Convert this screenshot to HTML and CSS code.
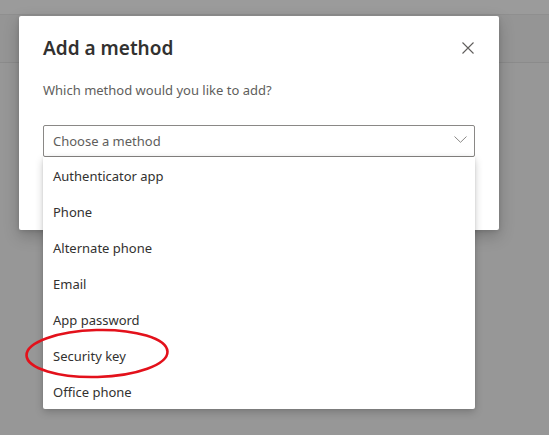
FILE: index.html
```html
<!DOCTYPE html>
<html lang="en">
<head>
<meta charset="utf-8">
<title>Add a method</title>
<link rel="stylesheet" href="styles.css">
</head>
<body>
<div class="backdrop">
  <div class="bg-top"></div>
  <div class="bg-band"></div>
  <div class="bg-rest"></div>
</div>

<div class="dialog" role="dialog" aria-labelledby="dlg-title">
  <div class="dialog-head">
    <h1 id="dlg-title" class="dialog-title">Add a method</h1>
    <button class="close-btn" aria-label="Close">
      <svg width="12" height="12" viewBox="0 0 12 12"><path d="M0.5 0.5 L11.5 11.5 M11.5 0.5 L0.5 11.5" stroke="#605e5c" stroke-width="1.1" fill="none"/></svg>
    </button>
  </div>
  <p class="dialog-sub">Which method would you like to add?</p>
  <div class="select-wrap">
    <div class="select">
      <span class="placeholder">Choose a method</span>
      <svg class="chev" width="13" height="7" viewBox="0 0 13 7"><path d="M0.5 0.5 L6.5 6.3 L12.5 0.5" stroke="#8a8886" stroke-width="1" fill="none"/></svg>
    </div>
    <ul class="options">
      <li>Authenticator app</li>
      <li>Phone</li>
      <li>Alternate phone</li>
      <li>Email</li>
      <li>App password</li>
      <li>Security key</li>
      <li>Office phone</li>
    </ul>
  </div>
</div>

<svg class="mark" width="150" height="54" viewBox="0 0 150 54">
  <ellipse cx="73" cy="26.5" rx="70.5" ry="23.5" fill="none" stroke="#e3111b" stroke-width="2.6" transform="rotate(-1.5 73 26.5)"/>
</svg>
</body>
</html>
```

FILE: styles.css
```css
* { box-sizing: border-box; }
html, body { margin: 0; padding: 0; }
body {
  width: 549px;
  height: 435px;
  overflow: hidden;
  background: #979797;
  font-family: "Segoe UI", "Noto Sans", "Open Sans", sans-serif;
  position: relative;
}
.backdrop { display: flex; flex-direction: column; height: 100%; }
.bg-top { height: 15px; background: #9b9b9b; border-bottom: 1px solid #8f8f8f; }
.bg-band { height: 48px; background: #959595; border-bottom: 1px solid #8b8b8b; }
.bg-rest { flex: 1; background: #979797; }

.dialog {
  position: absolute;
  left: 19px;
  top: 16px;
  width: 480px;
  height: 214px;
  background: #fff;
  border-radius: 2px;
  box-shadow: 0 6px 16px rgba(0,0,0,0.22), 0 1px 4px rgba(0,0,0,0.12);
  padding: 0 24px;
}
.dialog-head {
  display: flex;
  align-items: center;
  justify-content: space-between;
  height: 30px;
  margin-top: 17px;
}
.dialog-title {
  margin: 0;
  font-size: 19px;
  font-weight: 600;
  color: #323130;
  line-height: 30px;
}
.close-btn {
  border: 0;
  background: none;
  padding: 0;
  width: 12px;
  height: 12px;
  margin-right: 1px;
  display: flex;
}
.dialog-sub {
  margin: 17px 0 0;
  font-size: 13px;
  line-height: 20px;
  color: #605e5c;
}
.select-wrap { position: relative; margin-top: 25px; }
.select {
  height: 32px;
  border: 1px solid #8a8886;
  border-radius: 2px;
  display: flex;
  align-items: center;
  justify-content: space-between;
  padding: 0 7px 0 9px;
}
.placeholder { font-size: 13px; color: #605e5c; }
.chev { margin-top: -3px; }
.options {
  position: absolute;
  left: 0;
  right: 0;
  top: 32px;
  margin: 0;
  padding: 0;
  list-style: none;
  background: #fff;
  border-radius: 0 0 2px 2px;
  box-shadow: 0 3px 8px rgba(0,0,0,0.2), 0 0 3px rgba(0,0,0,0.1);
  z-index: 2;
}
.options li {
  height: 36px;
  line-height: 34px;
  padding: 2px 0 0 10px;
  font-size: 13px;
  color: #323130;
}
.mark {
  position: absolute;
  left: 24px;
  top: 327px;
  z-index: 3;
}
```
